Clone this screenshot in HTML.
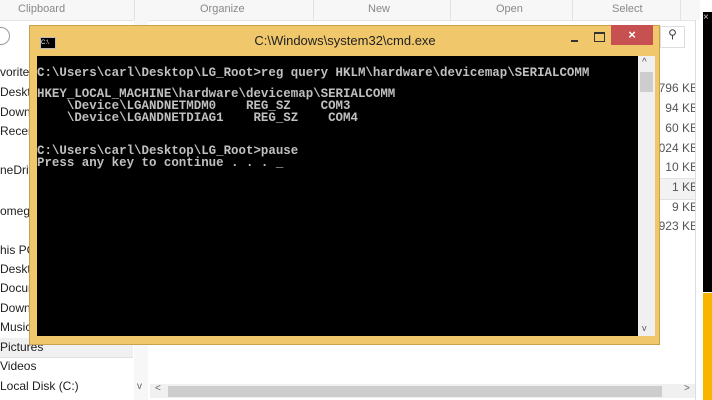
<!DOCTYPE html>
<html><head><style>
body{margin:0;width:712px;height:400px;overflow:hidden;background:#fff;position:relative;font-family:"Liberation Sans",sans-serif}
.a{position:absolute}
.nav{font-size:12px;color:#1e1e1e;left:0}
.sz{font-size:12px;color:#555;right:14px;text-align:right}
.con{font-family:"Liberation Mono",monospace;font-weight:bold;font-size:12.45px;color:#c0c0c0;white-space:pre;left:37px;line-height:12px}
</style></head><body>
<div class="a" style="left:0;top:0;width:700px;height:20px;background:#f7f7f7;border-bottom:1px solid #e6e6e6"></div>
<div class="a" style="top:3px;left:18px;font-size:11px;color:#888">Clipboard</div>
<div class="a" style="top:3px;left:200px;font-size:11px;color:#888">Organize</div>
<div class="a" style="top:3px;left:368px;font-size:11px;color:#888">New</div>
<div class="a" style="top:3px;left:496px;font-size:11px;color:#888">Open</div>
<div class="a" style="top:3px;left:612px;font-size:11px;color:#888">Select</div>
<div class="a" style="left:134px;top:0;width:1px;height:20px;background:#e2e2e2"></div>
<div class="a" style="left:313px;top:0;width:1px;height:20px;background:#e2e2e2"></div>
<div class="a" style="left:450px;top:0;width:1px;height:20px;background:#e2e2e2"></div>
<div class="a" style="left:572px;top:0;width:1px;height:20px;background:#e2e2e2"></div>
<div class="a" style="left:680px;top:0;width:1px;height:20px;background:#e2e2e2"></div>
<div class="a" style="left:-8px;top:27px;width:16px;height:16px;border:1px solid #999;border-radius:50%"></div>
<div class="a" style="left:660px;top:26px;width:23px;height:20px;border:1px solid #ddd;font-size:12px;color:#444;text-align:center">⚲</div>

<div class="a nav" style="top:65px">vorite</div>
<div class="a nav" style="top:85px">Deskto</div>
<div class="a nav" style="top:105px">Down</div>
<div class="a nav" style="top:124px">Recen</div>
<div class="a nav" style="top:163px">neDriv</div>
<div class="a nav" style="top:204px">omegr</div>
<div class="a nav" style="top:243px">his PC</div>
<div class="a nav" style="top:262px">Deskto</div>
<div class="a nav" style="top:281px">Docur</div>
<div class="a nav" style="top:301px">Down</div>
<div class="a nav" style="top:320px">Music</div>
<div class="a" style="left:0;top:338px;width:133px;height:19px;background:#f0f0f0;border-bottom:1px solid #e0e0e0"></div>
<div class="a nav" style="top:340px">Pictures</div>
<div class="a nav" style="top:359px">Videos</div>
<div class="a nav" style="top:379px">Local Disk (C:)</div>
<div class="a" style="left:134px;top:20px;width:14px;height:380px;background:#f7f7f7"></div>
<div class="a" style="left:137px;top:381px;font-size:10px;color:#666">v</div>
<div class="a" style="left:150px;top:384px;width:545px;height:14px;background:#f0f0f0"></div>
<div class="a" style="left:168px;top:386px;width:494px;height:11px;background:#cdcdcd"></div>
<div class="a" style="left:155px;top:383px;font-size:10px;color:#666">&lt;</div>
<div class="a" style="left:684px;top:383px;font-size:10px;color:#666">&gt;</div>

<div class="a sz" style="top:81px">796 KB</div>
<div class="a sz" style="top:101px">94 KB</div>
<div class="a sz" style="top:121px">60 KB</div>
<div class="a sz" style="top:141px">,024 KB</div>
<div class="a sz" style="top:160px">10 KB</div>
<div class="a" style="left:660px;top:178px;width:35px;height:20px;background:#f2f2f2;border-top:1px solid #e2e2e2;border-bottom:1px solid #e2e2e2"></div>
<div class="a sz" style="top:180px">1 KB</div>
<div class="a sz" style="top:200px">9 KB</div>
<div class="a sz" style="top:219px">,923 KB</div>

<div class="a" style="left:695px;top:20px;width:8px;height:380px;background:#fff;border-left:1px solid #ddd"></div>
<div class="a" style="left:703px;top:0;width:9px;height:12px;background:#fff"></div>
<div class="a" style="left:703px;top:12px;width:9px;height:280px;background:#000;color:#ccc;font-size:10px">×</div>
<div class="a" style="left:703px;top:293px;width:9px;height:107px;background:#f7b500"></div>

<!-- cmd window -->
<div class="a" style="left:29px;top:25px;width:631px;height:320px;background:#f0c76a;border:1px solid #c9a24c;box-sizing:border-box"></div>
<div class="a" style="left:40px;top:37px;width:14px;height:10px;background:#000;border:1px solid #bbb;color:#fff;font-size:6px;line-height:10px">C:\</div>
<div class="a" style="left:200px;top:33px;width:290px;text-align:center;font-size:13px;color:#222">C:\Windows\system32\cmd.exe</div>
<div class="a" style="left:571px;top:40px;width:7px;height:2px;background:#333"></div>
<div class="a" style="left:594px;top:32px;width:9px;height:7px;border:1px solid #333;border-top-width:2px"></div>
<div class="a" style="left:611px;top:25px;width:42px;height:20px;background:#c75050;color:#fff;text-align:center;font-size:13px;line-height:19px;font-weight:bold">×</div>
<div class="a" style="left:37px;top:56px;width:601px;height:280px;background:#000"></div>
<div class="a" style="left:638px;top:56px;width:17px;height:280px;background:#f0f0f0"></div>
<div class="a" style="left:640px;top:72px;width:13px;height:20px;background:#cdcdcd"></div>
<div class="a" style="left:642px;top:57px;font-size:10px;color:#555">^</div>
<div class="a" style="left:642px;top:323px;font-size:9px;color:#555">v</div>
<div class="a con" style="top:67px">C:\Users\carl\Desktop\LG_Root&gt;reg query HKLM\hardware\devicemap\SERIALCOMM</div>
<div class="a con" style="top:88px">HKEY_LOCAL_MACHINE\hardware\devicemap\SERIALCOMM
    \Device\LGANDNETMDM0    REG_SZ    COM3
    \Device\LGANDNETDIAG1    REG_SZ    COM4</div>
<div class="a con" style="top:145px">C:\Users\carl\Desktop\LG_Root&gt;pause
Press any key to continue . . . _</div>
</body></html>
